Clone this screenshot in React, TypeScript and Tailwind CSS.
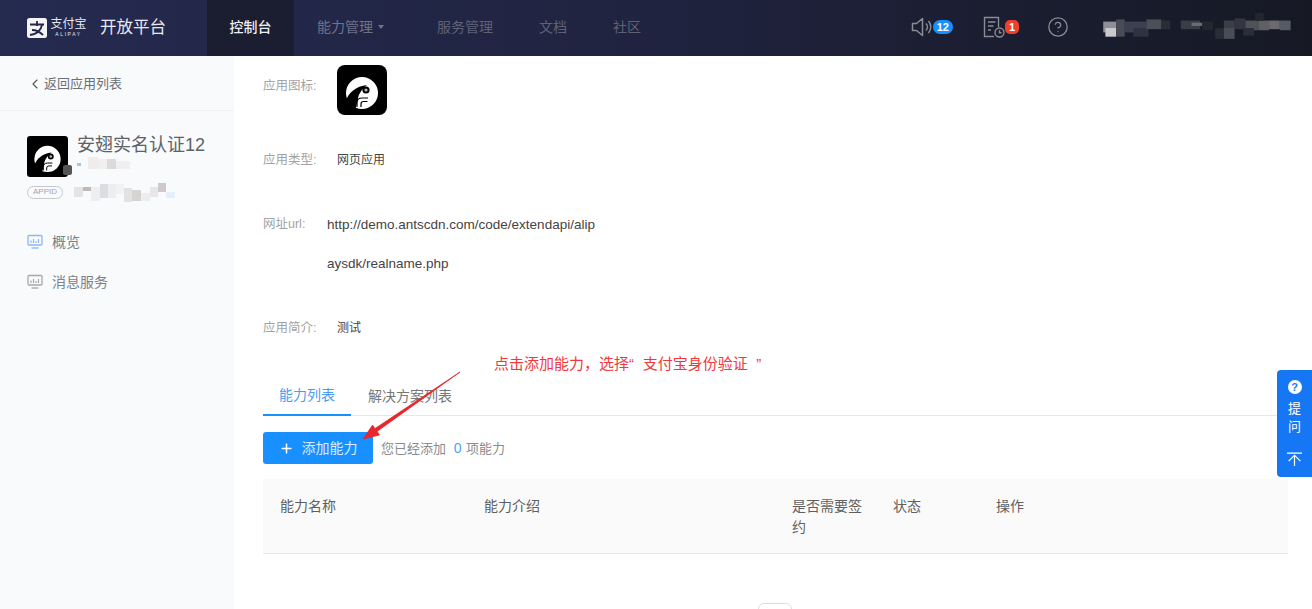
import { ChevronLeft, CircleHelp, Plus } from 'lucide-react';

const cjk = "font-['Liberation_Sans','Noto_Sans_CJK_SC',sans-serif]";

// blurred-out account text in the header and the ids in the sidebar
const headerMosaic: [number, number, number, number, string][] = [
  [0, 8, 12, 10, '#8d8f96'], [2, 14, 10, 8, '#c9cacd'], [12, 6, 8, 16, '#4a4c55'], [20, 8, 20, 10, '#3d4050'],
  [28, 14, 14, 8, '#2f3240'], [40, 6, 14, 9, '#4c4e58'], [54, 7, 8, 8, '#2a2d38'], [72, 7, 18, 8, '#3b3d46'],
  [82, 9, 10, 3, '#6b6d75'], [92, 8, 10, 8, '#25272f'], [104, 14, 8, 10, '#2a2c36'], [112, 7, 10, 8, '#3c3e4a'],
  [112, 14, 10, 10, '#4a4c56'], [122, 5, 10, 10, '#34363f'], [132, 7, 12, 9, '#50525a'], [130, 14, 10, 7, '#2b2d38'],
  [144, 7, 10, 9, '#5f5f64'], [154, 7, 10, 8, '#6b6a6e'], [164, 7, 10, 9, '#555a63'], [141, 0, 8, 7, '#24262f'],
];
const nameMosaic: [number, number, number, number, string][] = [
  [0, 6, 4, 3, '#9cc9f5'], [11, 0, 10, 12, '#efedec'], [21, 2, 9, 10, '#f1f0f0'], [30, 2, 9, 10, '#dcdada'], [39, 4, 14, 8, '#efefef'],
];
const idMosaic: [number, number, number, number, string][] = [
  [0, 6, 9, 10, '#e6e3e3'], [9, 6, 8, 4, '#bdbaba'], [17, 6, 9, 14, '#eeeeef'], [26, 3, 8, 14, '#dcdde2'], [34, 3, 8, 14, '#eceef2'],
  [42, 3, 8, 10, '#f1f2f4'], [50, 7, 8, 14, '#e3e1e1'], [58, 9, 9, 11, '#d6d3d3'], [67, 12, 9, 8, '#ededed'], [76, 6, 8, 10, '#e8e6e6'],
  [84, 2, 8, 9, '#cfcaca'], [92, 11, 9, 6, '#e6eff9'],
];

function Mosaic({ cells, w, h, vw, vh }: { cells: [number, number, number, number, string][]; w: number; h: number; vw: number; vh: number }) {
  return (
    <svg width={w} height={h} viewBox={`0 0 ${vw} ${vh}`} className="block blur-[0.6px]">
      {cells.map(([x, y, cw, ch, c], i) => (
        <rect key={i} x={x} y={y} width={cw} height={ch} fill={c} />
      ))}
    </svg>
  );
}

function AppIcon({ size, radius }: { size: number; radius: number }) {
  return (
    <svg width={size} height={size} viewBox="0 0 50 50" className="block shrink-0">
      <rect width="50" height="50" rx={radius} fill="#000" />
      <circle cx="25" cy="28" r="16" fill="#fff" />
      <path d="M9 36 C11 28 19 21 30 20 C24 25 21 30 21 34 L18 46 L6 46 Z" fill="#000" />
      <circle cx="29" cy="25" r="3.6" fill="#000" />
      <circle cx="29" cy="25" r="1.6" fill="#b5b5b5" />
      <path d="M20 42v-4q0-5 5-5h6M24 42v-3q0-2.500 2.500-2.500h4" stroke="#000" strokeWidth="1.200" fill="none" />
    </svg>
  );
}

function MonitorIcon({ color, base }: { color: string; base: string }) {
  return (
    <svg width="16" height="16" viewBox="0 0 16 16" fill="none" className="block shrink-0">
      <rect x="1" y="1.500" width="14" height="9.500" rx="1" stroke={color} strokeWidth="1.300" fill="none" />
      <path d="M4 9V6.500M6.500 9V5M9 9V7M11.500 9V5" stroke={color} strokeWidth="1.200" />
      <path d="M4.500 14h7" stroke={base} strokeWidth="1.600" />
    </svg>
  );
}

function SpeakerIcon() {
  return (
    <svg width="22" height="22" viewBox="0 0 22 22" fill="none" stroke="#8a8c94" strokeWidth="1.500" className="block">
      <path d="M1.500 7.500h4l6-5v17l-6-5h-4z" strokeLinejoin="round" />
      <path d="M15 7.500c1.800 2 1.800 5 0 7" />
      <path d="M17.500 5c3 3.500 3 8.500 0 12" />
    </svg>
  );
}

function DocClockIcon() {
  return (
    <svg width="22" height="22" viewBox="0 0 22 22" fill="none" stroke="#8a8c94" strokeWidth="1.400" className="block">
      <path d="M11 20.500H1.500V1.500h14V11" />
      <path d="M5 6h7.500M5 10h5.500M5 14h3" />
      <circle cx="16.500" cy="16.500" r="4.500" />
      <path d="M16.500 14.200v2.500h2" />
    </svg>
  );
}

function Header() {
  return (
    <header className="flex h-[56px] items-stretch bg-gradient-to-r from-[#252a50] via-[#20233f] to-[#161924]">
      <div className="flex w-[207px] shrink-0 items-center pb-[1px] pl-[27px]">
        <svg width="20" height="20" viewBox="0 0 20 20" className="block shrink-0">
          <rect width="20" height="20" rx="2.500" fill="#f4f4f6" />
          <path d="M3 6.500h14M10 3v5M15 7c-1 5-5 9-12 10M5 12c4 0 8 2 11 5" stroke="#23274a" strokeWidth="1.800" fill="none" />
        </svg>
        <div className="ml-[3px] flex w-[37px] flex-col items-center text-[#e6e7ee]">
          <span className="text-[12px] leading-[13px]">支付宝</span>
          <span className="text-[5px] leading-[6px] tracking-[1.600px]">ALIPAY</span>
        </div>
        <span className="ml-[13px] text-[16.500px] text-[#e8e9f0]">开放平台</span>
      </div>
      <nav className="flex text-[14px] text-[#6f7289]">
        <div className="flex w-[87px] items-center justify-center bg-[#1b1e30] pb-[2px] font-medium text-[#eceef5]">控制台</div>
        <div className="ml-[23px] flex items-center pb-[2px]">
          能力管理
          <span className="ml-[5px] h-0 w-0 border-x-[3.500px] border-t-[4px] border-x-transparent border-t-[#71748a]" />
        </div>
        <div className="ml-[53px] flex items-center pb-[2px] text-[#5f6276]">服务管理</div>
        <div className="ml-[46px] flex items-center pb-[2px] text-[#5f6276]">文档</div>
        <div className="ml-[46px] flex items-center pb-[2px] text-[#5f6276]">社区</div>
      </nav>
      <div className="ml-auto flex items-center pb-[2px]">
        <SpeakerIcon />
        <span className="rounded-full bg-[#1890ff] px-[4px] text-[11px] font-bold leading-[14px] text-white">12</span>
        <div className="ml-[30px]"><DocClockIcon /></div>
        <span className="rounded-[5px] bg-[#f0402d] px-[4px] text-[11px] font-bold leading-[14px] text-white">1</span>
        <CircleHelp size={22} strokeWidth={1.400} className="ml-[28px] text-[#8a8c94]" />
        <div className="ml-[34px] mr-[19px]"><Mosaic cells={headerMosaic} w={190} h={28} vw={176} vh={26} /></div>
      </div>
    </header>
  );
}

function Sidebar() {
  return (
    <aside className="w-[234px] shrink-0 bg-[#f8fafc]">
      <div className="flex h-[55px] items-center border-b border-[#f0f2f4] pl-[27px] pt-[2px] text-[13px] text-[#6b7076]">
        <ChevronLeft size={16} strokeWidth={1.600} className="text-[#555]" />
        <span className="ml-px">返回应用列表</span>
      </div>
      <div className="pl-[27px] pt-[25px]">
        <div className="flex">
          <div className="relative">
            <AppIcon size={41} radius={4} />
            <span className="absolute left-[36px] top-[29px] h-[10px] w-[9px] rounded-[2px] bg-[#555]" />
          </div>
          <div className="ml-[9px]">
            <div className="text-[18px] leading-[18px] text-[#5e6266]">安翅实名认证12</div>
            <div className="mt-[3px]"><Mosaic cells={nameMosaic} w={56} h={14} vw={56} vh={14} /></div>
          </div>
        </div>
        <div className="mt-[4px] flex items-center">
          <span className="flex h-[13px] w-[36px] items-center justify-center rounded-full border border-[#c8c8cc] text-[8px] leading-none text-[#a5a5aa]">APPID</span>
          <div className="ml-[9px]"><Mosaic cells={idMosaic} w={108} h={22} vw={104} vh={22} /></div>
        </div>
      </div>
      <ul className="mt-[19px] pl-[27px] text-[14px] text-[#7b8289]">
        <li className="flex h-[40px] items-center gap-[9px]">
          <MonitorIcon color="#8fb6f0" base="#9cc4f7" />
          概览
        </li>
        <li className="flex h-[40px] items-center gap-[9px]">
          <MonitorIcon color="#a8a8a8" base="#b5b5b5" />
          消息服务
        </li>
      </ul>
    </aside>
  );
}

function Row({ label, width, className, children }: { label: string; width: string; className: string; children: React.ReactNode }) {
  return (
    <div className={`flex text-[12px] ${className}`}>
      <div className={`${width} shrink-0 text-[12.500px] text-[#a3a3a3]`}>{label}</div>
      <div className="text-[#444]">{children}</div>
    </div>
  );
}

function Main() {
  return (
    <main className="relative min-w-0 flex-1 pl-[29px] pr-[24px]">
      <Row label="应用图标:" width="w-[74px]" className="mt-[9px] h-[50px] leading-[42px]">
        <AppIcon size={50} radius={8} />
      </Row>
      <Row label="应用类型:" width="w-[74px]" className="mt-[33px] leading-[24px]">网页应用</Row>
      <Row label="网址url:" width="w-[64px]" className="mt-[33px] leading-[39px]">
        <div className="w-[272px] break-all text-[13.500px]">http://demo.antscdn.com/code/extendapi/alipaysdk/realname.php</div>
      </Row>
      <Row label="应用简介:" width="w-[74px]" className="mt-[33px] leading-[24px]">测试</Row>

      <div className="mt-[33px] flex h-[43px] border-b border-[#e8e8e8] pt-[4px] text-[14px]">
        <div className="-mb-px flex w-[88px] items-center justify-center border-b-2 border-[#1890ff] text-[#4a9bf5]">能力列表</div>
        <div className="ml-[17px] flex items-center text-[#777]">解决方案列表</div>
      </div>

      <div className="mt-[16px] flex items-center">
        <button className="flex h-[32px] w-[110px] items-center justify-center rounded-[3px] bg-[#1890ff] text-[14px] text-[#d8ecff]">
          <Plus size={15} strokeWidth={2.400} className="mr-[8px] text-white" />
          添加能力
        </button>
        <span className="ml-[8px] text-[13px] text-[#8c8c8c]">
          您已经添加 <span className="ml-[4px] mr-[1px] text-[14px] text-[#4aa5f5]">0</span> 项能力
        </span>
      </div>

      <div className="mt-[15px] grid h-[75px] grid-cols-[204px_308px_102px_102px_1fr] border-b border-[#e8e8e8] bg-[#fafafa] text-[14px] leading-[21px] text-[#5f5f5f]">
        <div className="pl-[17px] pt-[17px]">能力名称</div>
        <div className="pl-[17px] pt-[17px]">能力介绍</div>
        <div className="pl-[17px] pr-[14px] pt-[17px]">是否需要签约</div>
        <div className="pl-[16px] pt-[17px]">状态</div>
        <div className="pl-[17px] pt-[17px]">操作</div>
      </div>

      <div className="ml-[495px] mt-[49px] h-[10px] w-[34px] rounded-t-[6px] border border-[#ddd]" />

      {/* annotation drawn over the screenshot */}
      <span className="absolute left-[260px] top-[298px] text-[15px] leading-[20px] text-[#f0383b] [word-spacing:4.500px]">点击添加能力，选择“ 支付宝身份验证 ”</span>
      <svg width="110" height="80" viewBox="0 0 110 80" className="absolute left-[125px] top-[312px]">
        <path d="M101 4 L18 63.400 L20.400 66.900 L4 71 L13.600 57.100 L16 60.600 Z" fill="#e8262c" stroke="#e8262c" strokeWidth="0.800" strokeLinejoin="round" />
      </svg>
    </main>
  );
}

export default function App() {
  return (
    <div className={`relative h-[609px] w-[1312px] overflow-hidden bg-white ${cjk}`}>
      <Header />
      <div className="flex h-[553px]">
        <Sidebar />
        <Main />
      </div>
      <div className="absolute right-0 top-[370px] flex h-[107px] w-[35px] flex-col items-center rounded-l-[4px] bg-[#1677f5] pt-[10px] text-white">
        <span className="flex h-[14px] w-[14px] items-center justify-center rounded-full bg-white text-[11px] font-bold leading-none text-[#1677f5]">?</span>
        <span className="mt-[6px] text-[13px] leading-[18px]">提</span>
        <span className="text-[13px] leading-[18px]">问</span>
        <svg width="15" height="15" viewBox="0 0 14 14" fill="none" stroke="#fff" strokeWidth="1.100" className="mt-[16px]">
          <path d="M0 1h14M7 13V3M1.500 8.500 7 3l5.500 5.500" />
        </svg>
      </div>
    </div>
  );
}
